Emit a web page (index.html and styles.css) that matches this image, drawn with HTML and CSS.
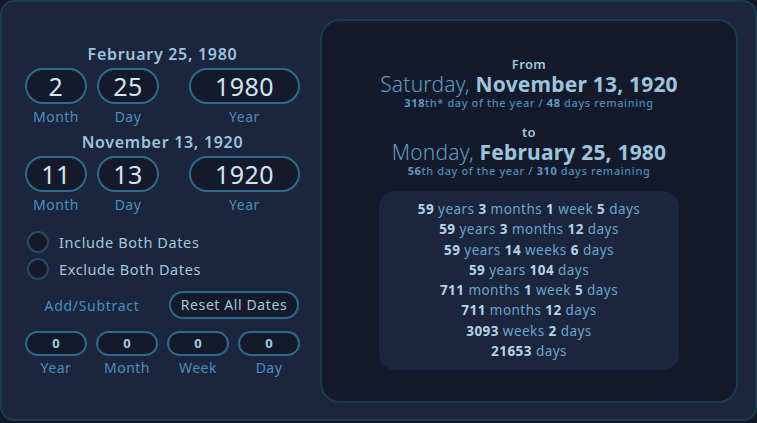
FILE: index.html
```html
<!DOCTYPE html>
<html>
<head>
<meta charset="utf-8">
<link rel="stylesheet" href="styles.css">
</head>
<body>
<div class="panel">
  <div class="left">
    <div class="date-title">February 25, 1980</div>
    <div class="date-row">
      <div class="field"><div class="box">2</div><div class="lbl">Month</div></div>
      <div class="field"><div class="box">25</div><div class="lbl">Day</div></div>
      <div class="field year"><div class="box">1980</div><div class="lbl">Year</div></div>
    </div>
    <div class="date-title">November 13, 1920</div>
    <div class="date-row">
      <div class="field"><div class="box">11</div><div class="lbl">Month</div></div>
      <div class="field"><div class="box">13</div><div class="lbl">Day</div></div>
      <div class="field year"><div class="box">1920</div><div class="lbl">Year</div></div>
    </div>
    <div class="radios">
      <div class="radio"><span class="circle"></span>Include Both Dates</div>
      <div class="radio"><span class="circle"></span>Exclude Both Dates</div>
    </div>
    <div class="addsub">
      <div class="addsub-lbl">Add/Subtract</div>
      <div class="reset">Reset All Dates</div>
    </div>
    <div class="small-row">
      <div class="sfield"><div class="sbox">0</div><div class="lbl">Year</div></div>
      <div class="sfield"><div class="sbox">0</div><div class="lbl">Month</div></div>
      <div class="sfield"><div class="sbox">0</div><div class="lbl">Week</div></div>
      <div class="sfield"><div class="sbox">0</div><div class="lbl">Day</div></div>
    </div>
  </div>
  <div class="right">
    <div class="fromto">From</div>
    <div class="big"><span class="wd">Saturday,</span> <b>November 13, 1920</b></div>
    <div class="sub"><b>318</b>th* day of the year / <b>48</b> days remaining</div>
    <div class="fromto to">to</div>
    <div class="big"><span class="wd">Monday,</span> <b>February 25, 1980</b></div>
    <div class="sub"><b>56</b>th day of the year / <b>310</b> days remaining</div>
    <div class="results">
      <div><b>59</b> years <b>3</b> months <b>1</b> week <b>5</b> days</div>
      <div><b>59</b> years <b>3</b> months <b>12</b> days</div>
      <div><b>59</b> years <b>14</b> weeks <b>6</b> days</div>
      <div><b>59</b> years <b>104</b> days</div>
      <div><b>711</b> months <b>1</b> week <b>5</b> days</div>
      <div><b>711</b> months <b>12</b> days</div>
      <div><b>3093</b> weeks <b>2</b> days</div>
      <div><b>21653</b> days</div>
    </div>
  </div>
</div>
</body>
</html>
```
FILE: styles.css
```css
html, body {
  margin: 0;
  padding: 0;
  background: #121826;
  width: 757px;
  height: 423px;
  overflow: hidden;
  font-family: "Noto Sans", "DejaVu Sans", sans-serif;
}
.panel {
  box-sizing: border-box;
  width: 757px;
  height: 421px;
  background: #1b253d;
  border: 2px solid #1c3b4b;
  border-radius: 14px;
  display: flex;
  gap: 20px;
  padding: 17px 17px 16px 23px;
}
.left {
  width: 275px;
  display: flex;
  flex-direction: column;
  padding-top: 25px;
}
.date-title {
  text-align: center;
  color: #9cc4dc;
  font-weight: 600;
  font-size: 16px;
  letter-spacing: 0.7px;
  line-height: 20px;
  height: 20px;
}
.date-row {
  display: flex;
  gap: 10px;
  margin-top: 4px;
}
.field {
  width: 62px;
  display: flex;
  flex-direction: column;
  align-items: center;
}
.field.year {
  width: 111px;
  margin-left: 20px;
}
.box {
  box-sizing: border-box;
  width: 100%;
  height: 36px;
  border: 2px solid #2b6a8a;
  border-radius: 18px;
  background: #141a2b;
  color: #d3e5ef;
  font-size: 25px;
  letter-spacing: 0.5px;
  line-height: 32px;
  text-align: center;
}
.lbl {
  color: #4b90bd;
  font-size: 14px;
  letter-spacing: 0.5px;
  line-height: 18px;
  margin-top: 4px;
}
.date-row + .date-title { margin-top: 6px; }
.radios {
  margin-top: 17px;
  display: flex;
  flex-direction: column;
  gap: 6px;
}
.radio {
  display: flex;
  align-items: center;
  color: #a3c8de;
  font-size: 14.5px;
  letter-spacing: 0.6px;
  height: 21px;
}
.circle {
  box-sizing: border-box;
  width: 22px;
  height: 22px;
  border-radius: 50%;
  border: 2px solid #234c63;
  background: #141a2b;
  margin-left: 2px;
  margin-right: 10px;
}
.addsub {
  display: flex;
  align-items: center;
  margin-top: 12px;
}
.addsub-lbl {
  width: 134px;
  margin-right: 10px;
  text-align: center;
  color: #4b90bd;
  font-size: 14px;
  letter-spacing: 0.7px;
}
.reset {
  box-sizing: border-box;
  width: 130px;
  height: 28px;
  border: 2px solid #2b6a8a;
  border-radius: 14px;
  background: #141a2b;
  color: #a3c8de;
  font-size: 14px;
  letter-spacing: 0.6px;
  line-height: 24px;
  text-align: center;
}
.small-row {
  display: grid;
  grid-template-columns: repeat(4, 1fr);
  gap: 9px;
  margin-top: 12px;
}
.sfield {
  display: flex;
  flex-direction: column;
  align-items: center;
}
.sbox {
  box-sizing: border-box;
  width: 100%;
  height: 25px;
  border: 2px solid #2b6a8a;
  border-radius: 13px;
  background: #141a2b;
  color: #a3c8de;
  font-weight: 700;
  font-size: 13px;
  line-height: 21px;
  text-align: center;
}
.sfield .lbl { margin-top: 3px; }
.right {
  box-sizing: border-box;
  width: 418px;
  height: 384px;
  background: #141a2b;
  border: 2px solid #1c3b4b;
  border-radius: 20px;
  display: flex;
  flex-direction: column;
  align-items: center;
  padding-top: 35px;
}
.fromto {
  color: #a3c8de;
  font-size: 13px;
  font-weight: 600;
  letter-spacing: 0.4px;
  line-height: 16px;
}
.fromto.to { margin-top: 15px; }
.big {
  color: #88b9d6;
  font-size: 21px;
  letter-spacing: 0.2px;
  line-height: 23px;
  margin-top: 1px;
  white-space: nowrap;
}
.big .wd { font-weight: 300; color: #5e9cc4; }
.big b { font-weight: 700; color: #9cc4dc; }
.sub {
  color: #4a8cbb;
  font-size: 11px;
  letter-spacing: 0.6px;
  line-height: 13px;
  font-weight: 500;
  white-space: nowrap;
}
.sub b { font-weight: 700; color: #5c9cc8; }
.results {
  margin-top: 14px;
  width: 300px;
  box-sizing: border-box;
  background: #1b253d;
  border-radius: 16px;
  padding: 8px 0 9px;
  text-align: center;
  color: #6aa5cc;
  font-size: 13.5px;
  letter-spacing: 0.45px;
  line-height: 20.3px;
}
.results b { color: #b5d3e5; font-weight: 700; }
```
